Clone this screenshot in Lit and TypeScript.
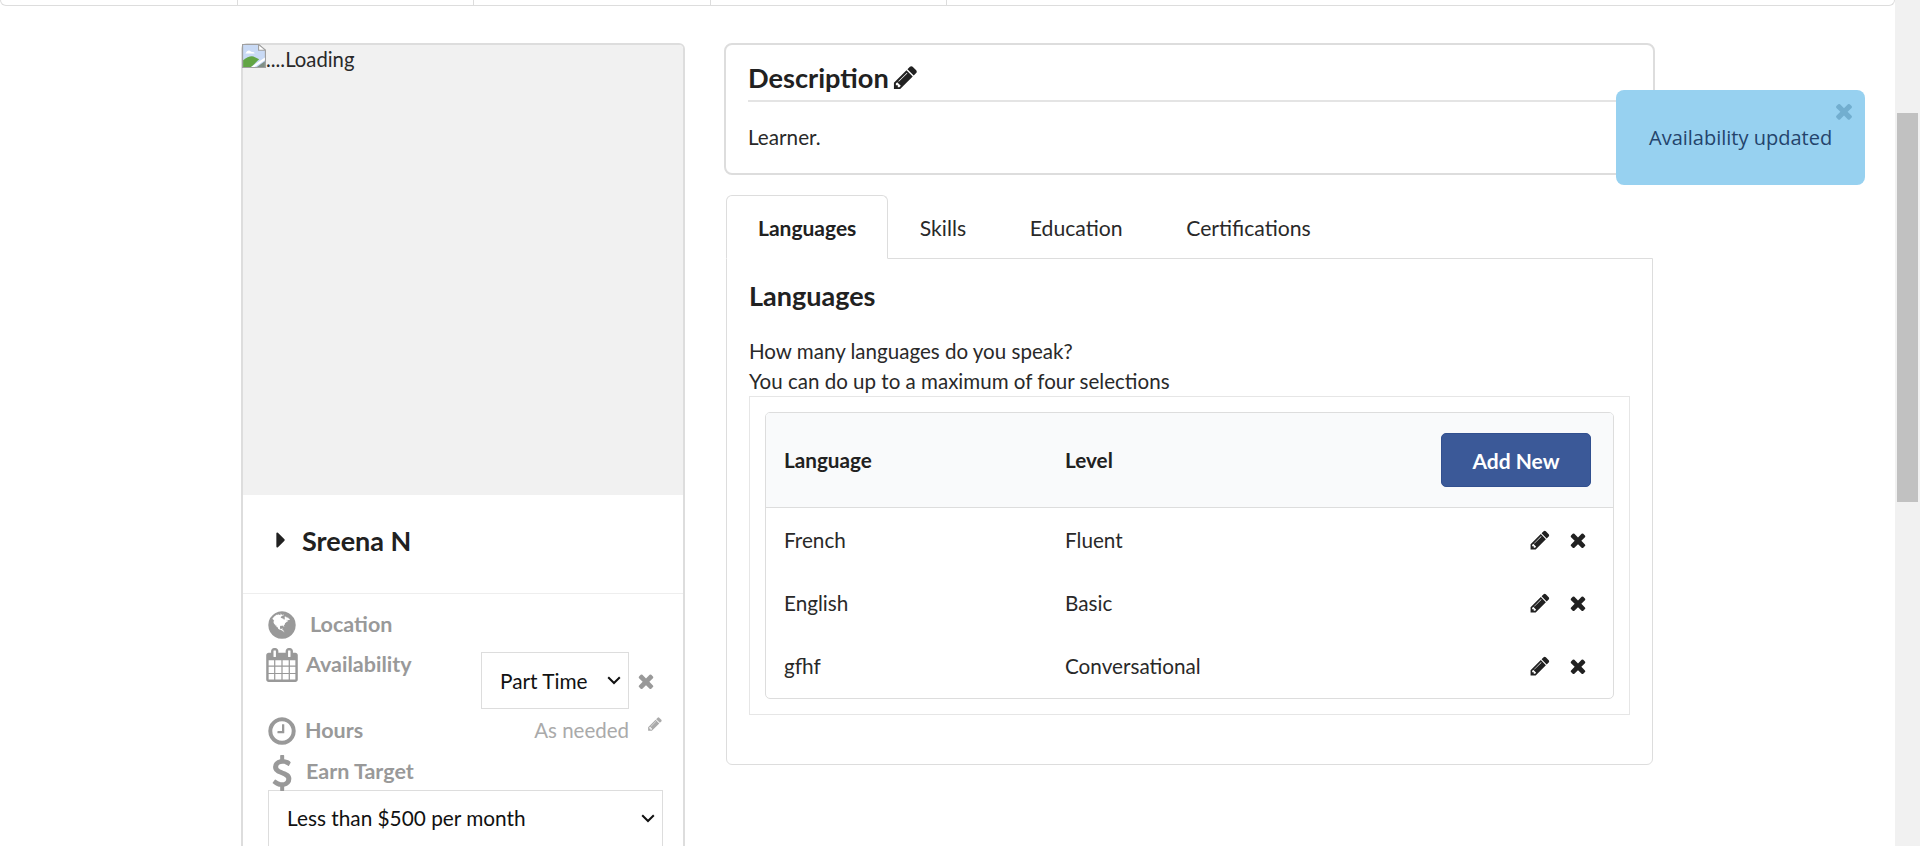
import { html, css, svg, LitElement } from 'lit';
import { customElement } from 'lit/decorators.js';

const PENCIL = svg`<path d="M491 1536l91-91-235-235-91 91v107h128v128h107zm523-928q0-22-22-22-10 0-17 7l-542 542q-7 7-7 17 0 22 22 22 10 0 17-7l542-542q7-7 7-17zm-54-192l416 416-832 832h-416v-416zm683 96q0 53-37 90l-166 166-416-416 166-165q36-38 90-38 53 0 91 38l235 234q37 39 37 91z"/>`;
const TIMES = svg`<path d="M1490 1322q0 40-28 68l-136 136q-28 28-68 28t-68-28l-294-294-294 294q-28 28-68 28t-68-28l-136-136q-28-28-28-68t28-68l294-294-294-294q-28-28-28-68t28-68l136-136q28-28 68-28t68 28l294 294 294-294q28-28 68-28t68 28l136 136q28 28 28 68t-28 68l-294 294 294 294q28 28 28 68z"/>`;
const CARET = svg`<path d="M1152 896q0 26-19 45l-448 448q-19 19-45 19t-45-19-19-45v-896q0-26 19-45t45-19 45 19l448 448q19 19 19 45z"/>`;
const CLOCK = svg`<path d="M1024 544v448q0 14-9 23t-23 9h-320q-14 0-23-9t-9-23v-64q0-14 9-23t23-9h224v-352q0-14 9-23t23-9h64q14 0 23 9t9 23zm416 352q0-148-73-273t-198-198-273-73-273 73-198 198-73 273 73 273 198 198 273 73 273-73 198-198 73-273zm224 0q0 209-103 385.500t-279.500 279.500-385.500 103-385.500-103-279.500-279.500-103-385.500 103-385.500 279.500-279.500 385.500-103 385.500 103 279.500 279.500 103 385.500z"/>`;
const DOLLAR = svg`<path d="M1362 1185q0 153-99.500 263.500t-258.500 136.500v175q0 14-9 23t-23 9h-135q-13 0-22.500-9.500t-9.500-22.500v-175q-66-9-127.500-31t-101.500-44.500-74-48-46.500-37.500-17.500-18q-17-21-2-41l103-135q7-10 23-12 15-2 24 9l2 2q113 99 243 125 37 8 74 8 81 0 142.500-43t61.500-122q0-28-15-53t-33.500-42-58.500-37.500-66-32-80-32.500q-39-16-61.500-25t-61.500-26.500-62.500-31-56.500-35.500-53.500-42.500-43.500-49-35.500-58-21-66.500-8.500-78q0-138 98-242t255-134v-180q0-13 9.500-22.500t22.500-9.500h135q14 0 23 9t9 23v176q57 6 110.500 23t87 33.500 63.500 37.500 39 29 15 14q17 18 5 38l-81 146q-8 15-23 16-14 3-27-7-3-3-14.500-12t-39-26.500-58.500-32-74.500-26-85.500-11.500q-95 0-155 43t-60 111q0 26 8.500 48t29.500 41.500 39.500 33 56 31 60.500 27 70 27.500q53 20 81 31.500t76 35 75.500 42.500 62 50 53 63.500 31.500 76.500 13 94z"/>`;
const CALENDAR = svg`<path d="M192 1664h288v-288h-288v288zm352 0h320v-288h-320v288zm-352-352h288v-320h-288v320zm352 0h320v-320h-320v320zm-352-384h288v-288h-288v288zm736 736h320v-288h-320v288zm-384-736h320v-288h-320v288zm768 736h288v-288h-288v288zm-384-352h320v-320h-320v320zm-352-864v-288q0-13-9.500-22.500t-22.500-9.500h-64q-13 0-22.500 9.500t-9.500 22.500v288q0 13 9.500 22.500t22.500 9.500h64q13 0 22.500-9.500t9.500-22.500zm736 864h288v-320h-288v320zm-384-384h320v-288h-320v288zm384 0h288v-288h-288v288zm32-480v-288q0-13-9.500-22.500t-22.500-9.500h-64q-13 0-22.500 9.500t-9.500 22.500v288q0 13 9.500 22.500t22.500 9.500h64q13 0 22.500-9.500t9.500-22.500zm384-64v1280q0 52-38 90t-90 38h-1408q-52 0-90-38t-38-90v-1280q0-52 38-90t90-38h128v-96q0-66 47-113t113-47h64q66 0 113 47t47 113v96h384v-96q0-66 47-113t113-47h64q66 0 113 47t47 113v96h128q52 0 90 38t38 90z"/>`;
const GLOBE = svg`<path d="M896 128q209 0 385.500 103t279.500 279.500 103 385.500-103 385.500-279.500 279.500-385.500 103-385.500-103-279.500-279.500-103-385.500 103-385.500 279.500-279.500 385.500-103zm274 521q-2 1-9.500 9.500t-13.500 9.500q2 0 4.500-5t5-11 3.500-7q6-7 22-15 14-6 52-12 34-8 51 11-2-2 9.500-13t14.500-12q3-2 15-4.500t15-7.500l2-22q-12 1-17.500-7t-6.500-21q0 2-6 8 0-7-4.500-8t-11.500 1-9 1q-10-3-15-7.500t-8-16.500-4-15q-2-5-9.500-10.500t-9.500-10.500q-1-2-2.500-5.500t-3-6.500-4-5.500-5.500-2.500-7 5-7.500 10-4.500 5q-3-2-6-1.500t-4.500 1-4.500 3-5 3.500q-3 2-8.500 3t-8.500 2q15-5-1-11-10-4-16-3 9-4 7.500-12t-8.500-14h5q-1-4-8.500-8.500t-17.500-8.500-13-6q-8-5-34-9.500t-33-.5q-5 6-4.500 10.500t4 14 3.500 12.500q1 6-5.500 13t-6.500 12q0 7 14 15.500t10 21.500q-3 8-16 16t-16 12q-5 8-1.500 18.500t10.500 16.500q2 2 1.500 4t-3.500 4.500-5.500 4-6.500 3.500l-3 2q-11 5-20.500-6t-13.500-26q-7-25-16-30-23-8-29 1-5-13-41-26-25-9-58-4 6-1 0-15-7-15-19-12 3-6 4-17.500t1-13.500q3-13 12-23 1-1 7-8.500t9.500-13.500.5-6q35 4 50-11 5-5 11.500-17t10.500-17q9-6 14-5.500t14.500 5.500 14.500 5q14 1 15.500-11t-7.500-20q12 1 3-17-4-7-8-9-12-4-27 5-8 4 2 8-1-1-9.500 10.500t-16.500 17.500-14-13q-1-1-5.500-13.500t-9.500-13.500q-8 0-16 15 3-8-11-15t-24-8q19-12-8-27-7-4-20.500-5t-19.500 4q-5 7-5.500 11.500t5 8 10.500 5.500 11.500 4 8.500 3q14 10 8 14-2 1-8.500 3.500t-11.500 4.500-6 4q-3 4 0 14t-2 14q-5-5-9-17.500t-7-16.500q7 9-25 6l-10-1q-4 0-16 2t-20.500 1-13.500-8q-4-8 0-20 1-4 4-2-4-3-11-9.500t-10-8.500q-46 15-94 41 6 1 12-1 5-2 13-6.500t10-5.500q34-14 42-7l5-5q14 16 20 25-7-4-30-1-20 6-22 12 7 12 5 18-4-3-11.500-10t-14.500-11-15-5q-16 0-22 1-146 80-235 222 7 7 12 8 4 1 5 9t2.500 11 11.500-3q9 8 3 19 1-1 44 27 19 17 21 21 3 11-10 18-1-2-9-9t-9-4q-3 5 .5 18.500t10.500 12.500q-7 0-9.500 16t-2.500 35.500-1 23.500l2 1q-3 12 5.500 34.500t21.500 19.500q-13 3 20 43 6 8 8 9 3 2 12 7.500t15 10 10 10.500q4 5 10 22.500t14 23.500q-2 6 9.500 20t10.500 23q-1 0-2.500 1t-2.500 1q3 7 15.500 14t15.500 13q1 3 2 10t3 11 8 2q2-20-24-62-15-25-17-29-3-5-5.500-15.500t-4.500-14.500q2 0 6 1.500t8.500 3.500 7.500 4 2 3q-3 7 2 17.500t12 18.500 17 19 12 13q6 6 14 19.500t0 13.500q9 0 20 10.500t17 19.500q5 8 8 26t5 24q2 7 8.500 13.500t12.500 9.500l16 8 13 7q5 2 18.500 10.500t21.500 11.500q10 4 16 4t14.500-2.500 13.500-3.500q15-2 29 15t21 21q36 19 55 11-2 1 .5 7.500t8 15.500 9 14.500 5.500 8.500q5 6 18 15t18 15q6-4 7-9-3 8 7 20t18 10q14-3 14-32-31 15-49-18 0-1-2.500-5.500t-4-8.500-2.500-8.500 0-7.500 5-3q9 0 10-3.500t-2-12.500-4-13q-1-8-11-20t-12-15q-5 9-16 8t-16-9q0 1-1.500 5.500t-1.500 6.500q-13 0-15-1 1-3 2.500-17.500t3.500-22.500q1-4 5.500-12t7.500-14.500 4-12.500-4.500-9.500-17.500-2.500q-19 1-26 20-1 3-3 10.500t-5 11.500-9 7q-7 3-24 2t-24-5q-13-8-22.500-29t-9.500-37q0-10 2.500-26.500t3-25-5.500-24.500q3-2 9-9.500t10-10.500q2-1 4.500-1.500t4.500 0 4-1.500 3-6q-1-1-4-3-3-3-4-3 7 3 28.500-1.500t27.500 1.500q15 11 22-2 0-1-2.500-9.500t-.500-13.500q5 27 29 9 3 3 15.500 5t17.500 5q3 2 7 5.500t5.500 4.500 5-.5 8.500-6.500q10 14 12 24 11 40 19 44 7 3 11 2t4.500-9.500 0-14-1.500-12.500l-1-8v-18l-1-8q-15-3-18.500-12t1.500-18.500 15-18.500q1-1 8-3.500t15.500-6.500 12.500-8q21-19 15-35 7 0 11-9-1 0-5-3t-7.500-5-4.500-2q9-5 2-16 5-3 7.500-11t7.500-10q9 12 21 2 8-8 1-16 5-7 20.500-10.500t18.500-9.500q7 2 8-2t1-12 3-12q4-5 15-9t13-5l17-11q3-4 0-4 18 2 31-11 10-11-6-20 3-6-3-9.500t-15-5.500q3-1 11.500-.5t10.500-.5q25-6-7-22-6-3-19-12.500t-18-11.500-10.500-1.500-12.500-3.500z"/>`;

const icon = (shape: unknown) =>
  html`<svg class="icon" viewBox="0 0 1792 1792" fill="currentColor">${shape}</svg>`;

const LANGUAGES = [
  { name: 'French', level: 'Fluent' },
  { name: 'English', level: 'Basic' },
  { name: 'gfhf', level: 'Conversational' },
];

const TABS = ['Languages', 'Skills', 'Education', 'Certifications'];

@customElement('app-root')
export class AppRoot extends LitElement {
  static styles = css`
    :host {
      display: flex;
      position: relative;
      width: 1920px;
      height: 846px;
      overflow: hidden;
      background: #fff;
      color: #292929;
      font-family: Lato, 'Liberation Sans', sans-serif;
      font-size: 20.7px;
      line-height: 30px;
    }

    .page {
      width: 1895px;
      flex: none;
    }

    .scrollbar {
      flex: 1;
      background: #f1f1f1;
      padding: 113px 2px 0;
    }

    .thumb {
      height: 389px;
      background: #c1c1c1;
    }

    .topnav {
      display: flex;
      height: 6px;
      box-sizing: border-box;
      border: 1px solid #ddd;
      border-top: none;
      border-radius: 0 0 6px 6px;
    }

    .topnav div {
      width: 235.6px;
      flex: none;
      border-right: 1px solid #ddd;
    }

    .content {
      display: flex;
      align-items: flex-start;
      padding: 37px 0 0 241px;
      gap: 39px;
    }

    .icon {
      display: block;
      flex: none;
    }

    /* left profile card */
    .profile {
      width: 444px;
      height: 820px;
      flex: none;
      box-sizing: border-box;
      border: 2px solid #ddd;
      border-radius: 6px 6px 0 0;
    }

    .photo {
      display: flex;
      align-items: flex-start;
      height: 450px;
      background: #f1f1f1;
      border-radius: 4px 4px 0 0;
    }

    .photo svg {
      width: 24px;
      height: 24px;
      flex: none;
      margin: -1px 0 0 -1px;
    }

    .photo span {
      font-size: 20.3px;
      line-height: 28px;
    }

    .name {
      display: flex;
      align-items: center;
      height: 99px;
      box-sizing: border-box;
      border-bottom: 1px solid #eee;
      padding: 0 0 7px 25px;
      color: #212121;
      font-size: 27px;
      font-weight: 700;
    }

    .name .icon {
      width: 26px;
      height: 26px;
      margin: -2px 8px 0 0;
    }

    .details {
      padding: 15px 20px 0 25px;
      color: #999;
      font-size: 21.5px;
      font-weight: 700;
    }

    .detail {
      display: flex;
      align-items: flex-start;
    }

    .location {
      height: 40px;
    }

    .location .icon {
      width: 32px;
      height: 32px;
      margin-left: -2px;
      margin-right: 12px;
    }

    .availability {
      height: 66px;
    }

    .availability .icon {
      width: 34px;
      height: 34px;
      margin: -1px 7px 0 -3px;
    }

    select {
      appearance: none;
      box-sizing: border-box;
      border: 1px solid #ddd;
      border-radius: 0;
      background: #fff url("data:image/svg+xml,%3Csvg xmlns='http://www.w3.org/2000/svg' width='14' height='9'%3E%3Cpath d='M1.2 1.2 7 7l5.800-5.800' fill='none' stroke='%23111' stroke-width='2'/%3E%3C/svg%3E") no-repeat right 7px center;
      color: #111;
      font: 400 20.8px Lato, 'Liberation Sans', sans-serif;
      padding: 0 14px 1px 18px;
    }

    .part-time {
      width: 148px;
      height: 57px;
      margin: 3px 0 0 auto;
    }

    .remove {
      display: flex;
      align-items: center;
      justify-content: center;
      width: 34px;
      height: 57px;
      margin-top: 3px;
      color: #999;
    }

    .remove .icon {
      width: 22px;
      height: 22px;
      margin: 0;
    }

    .hours {
      height: 41px;
    }

    .hours .icon {
      width: 32px;
      height: 32px;
      margin: 0 7px 0 -2px;
    }

    .as-needed {
      margin: 0 34px 0 auto;
      color: #aaa;
      font-size: 20.5px;
      font-weight: 400;
      position: relative;
    }

    .as-needed .icon {
      position: absolute;
      left: 113px;
      top: 1px;
      width: 16px;
      height: 16px;
      margin: 0;
    }

    .earn {
      height: 34px;
    }

    .earn .icon {
      width: 36px;
      height: 36px;
      margin: -1px 6px 0 -4px;
    }

    .earn-select {
      display: block;
      width: 395px;
      height: 57px;
      padding-bottom: 3px;
    }

    /* right column */
    .main {
      width: 931px;
      flex: none;
    }

    .description {
      box-sizing: border-box;
      height: 132px;
      border: 2px solid #ddd;
      border-radius: 8px;
      padding: 0 16px 0 23px;
    }

    .description h2 {
      display: flex;
      align-items: center;
      gap: 3px;
      margin: 0 0 0 -1px;
      height: 57px;
      box-sizing: border-box;
      padding-top: 10px;
      border-bottom: 2px solid #e4e4e4;
      color: #212121;
      font-size: 27.2px;
      font-weight: 700;
      line-height: 40px;
    }

    .description h2 .icon {
      width: 27px;
      height: 27px;
    }

    .description p {
      margin: 20px 0 0 -1px;
    }

    .tabs {
      display: flex;
      margin: 20px 0 0 2px;
      height: 64px;
      position: relative;
      font-size: 21.2px;
    }

    .tab {
      box-sizing: border-box;
      height: 63px;
      padding: 0 31.8px;
      line-height: 66px;
    }

    .tab.active {
      width: 162px;
      height: 64px;
      border: 1px solid #ddd;
      border-bottom: 1px solid #fff;
      border-radius: 6px 6px 0 0;
      padding: 0 31px;
      color: #212121;
      font-size: 21px;
      font-weight: 700;
      line-height: 64px;
      position: relative;
      z-index: 1;
    }

    .panel {
      margin: -1px 0 0 2px;
      box-sizing: border-box;
      width: 927px;
      height: 507px;
      border: 1px solid #ddd;
      border-radius: 0 0 6px 6px;
      padding: 19px 19px 0 22px;
    }

    .panel h3 {
      margin: 0 0 22px;
      color: #212121;
      font-size: 27px;
      font-weight: 700;
      line-height: 36px;
    }

    .panel p {
      margin: 0;
      font-size: 20.55px;
    }

    .frame {
      box-sizing: border-box;
      width: 881px;
      height: 319px;
      border: 1px solid #e6e6e6;
      padding: 15px 15px 0 15px;
    }

    .grid {
      box-sizing: border-box;
      border: 1px solid #ddd;
      border-radius: 5px;
      height: 287px;
      overflow: hidden;
    }

    .row {
      display: grid;
      grid-template-columns: 281px 1fr auto;
      align-items: center;
      height: 63px;
      padding: 0 17px 0 18px;
    }

    .row.head {
      height: 94px;
      background: #f9fafb;
      border-bottom: 1px solid #ddd;
      color: #212121;
      font-weight: 700;
    }

    .add {
      box-sizing: border-box;
      width: 150px;
      height: 54px;
      margin-right: 5px;
      border: 1px solid #32508f;
      border-radius: 5px;
      background: #3b5998;
      color: #fff;
      font: 700 21px Lato, 'Liberation Sans', sans-serif;
    }

    .actions {
      display: flex;
      align-items: center;
      justify-self: end;
      gap: 16px;
      margin-right: 7px;
      color: #212121;
    }

    .actions .icon {
      width: 22px;
      height: 22px;
    }

    /* toast */
    .toast {
      position: absolute;
      left: 1616px;
      top: 90px;
      width: 249px;
      height: 95px;
      box-sizing: border-box;
      border-radius: 8px;
      background: #97d1f0;
      color: #24446c;
      padding: 33px 0 0 33px;
      font-family: 'Open Sans', sans-serif;
      font-size: 20px;
    }

    .toast .icon {
      position: absolute;
      right: 9px;
      top: 9px;
      width: 24px;
      height: 24px;
      color: #72aecf;
    }
  `;

  render() {
    return html`
      <div class="page">
        <div class="topnav"><div></div><div></div><div></div><div></div></div>
        <div class="content">
          <section class="profile">
            <div class="photo">
              <svg viewBox="1 0 21 25" preserveAspectRatio="none">
                <path d="M1.500.5h14l6 6v18h-20z" fill="#c9daf5" stroke="#a0a0a0" />
                <path d="M15.500.5v6h6z" fill="#fff" stroke="#a0a0a0" />
                <path d="M2 24v-7q5-5 9-4l5 3-7 8z" fill="#62a544" />
                <path d="M9 24l12-10v3l-9 7z" fill="#fff" />
                <path d="M14 24l7-6v6z" fill="#7f8f85" />
                <path d="M4 10q2-5 5-2 3 0 3 2z" fill="#fff" />
              </svg>
              <span>....Loading</span>
            </div>
            <div class="name">${icon(CARET)}<span>Sreena N</span></div>
            <div class="details">
              <div class="detail location">${icon(GLOBE)}<span>Location</span></div>
              <div class="detail availability">
                ${icon(CALENDAR)}<span>Availability</span>
                <select class="part-time" aria-label="Availability"><option>Part Time</option></select>
                <span class="remove">${icon(TIMES)}</span>
              </div>
              <div class="detail hours">
                ${icon(CLOCK)}<span>Hours</span>
                <span class="as-needed">As needed${icon(PENCIL)}</span>
              </div>
              <div class="detail earn">${icon(DOLLAR)}<span>Earn Target</span></div>
              <select class="earn-select" aria-label="Earn Target"><option>Less than $500 per month</option></select>
            </div>
          </section>
          <section class="main">
            <div class="description">
              <h2>Description${icon(PENCIL)}</h2>
              <p>Learner.</p>
            </div>
            <div class="tabs">
              ${TABS.map((t, i) => html`<div class="tab ${i === 0 ? 'active' : ''}">${t}</div>`)}
            </div>
            <div class="panel">
              <h3>Languages</h3>
              <p>How many languages do you speak?<br />You can do up to a maximum of four selections</p>
              <div class="frame">
                <div class="grid">
                  <div class="row head">
                    <span>Language</span><span>Level</span>
                    <button class="add">Add New</button>
                  </div>
                  ${LANGUAGES.map(
                    (l) => html`<div class="row">
                      <span>${l.name}</span><span>${l.level}</span>
                      <div class="actions">${icon(PENCIL)}${icon(TIMES)}</div>
                    </div>`
                  )}
                </div>
              </div>
            </div>
          </section>
        </div>
      </div>
      <div class="scrollbar"><div class="thumb"></div></div>
      <div class="toast">Availability updated${icon(TIMES)}</div>
    `;
  }
}
